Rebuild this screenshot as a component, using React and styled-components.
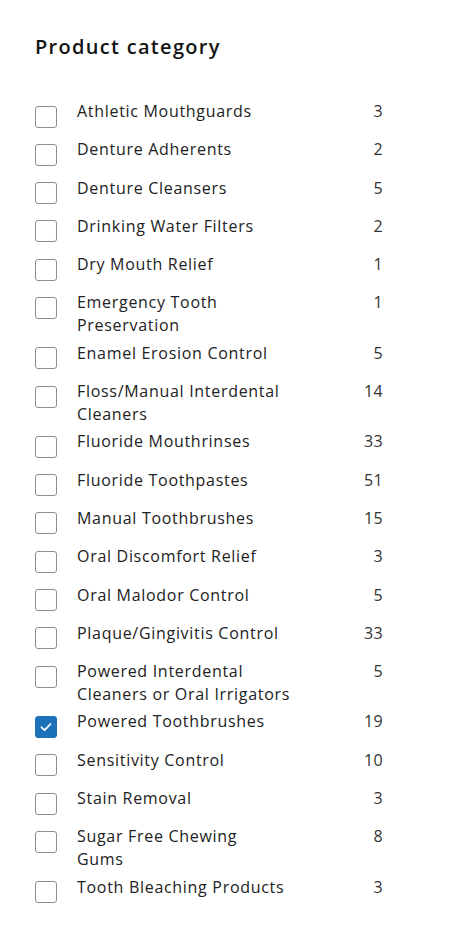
import React from "react";
import styled, { createGlobalStyle } from "styled-components";

const GlobalStyle = createGlobalStyle`
  html, body {
    margin: 0;
    padding: 0;
    background: #fff;
  }
  body {
    font-family: "Open Sans", "Liberation Sans", sans-serif;
    color: #222;
  }
`;

const Panel = styled.section`
  width: 348px;
  padding: 35px 0 0 35px;
`;

const Title = styled.h2`
  margin: 0 0 41px;
  font-size: 20px;
  line-height: 24px;
  font-weight: 600;
  letter-spacing: 1.3px;
  color: #141414;
`;

const List = styled.ul`
  list-style: none;
  margin: 0;
  padding: 0;
  display: flex;
  flex-direction: column;
  gap: 4.3px;
`;

const Row = styled.li`
  display: grid;
  grid-template-columns: 22px 1fr auto;
  column-gap: 20px;
  align-items: start;
  min-height: 34px;
  cursor: pointer;
`;

const Box = styled.span`
  box-sizing: border-box;
  width: 22px;
  height: 22px;
  margin-top: 5.5px;
  border-radius: 3px;
  border: 1.5px solid ${(p) => (p.$checked ? "#1c72b8" : "#8d8d8d")};
  background: ${(p) => (p.$checked ? "#1c72b8" : "#fff")};
  display: flex;
  align-items: center;
  justify-content: center;
`;

const Label = styled.span`
  max-width: 230px;
  white-space: pre-line;
  font-size: 16px;
  line-height: 23px;
  letter-spacing: 0.7px;
  color: #222;
`;

const Count = styled.span`
  font-size: 16px;
  line-height: 23px;
  letter-spacing: 0.4px;
  color: #333;
  text-align: right;
`;

const categories = [
  ["Athletic Mouthguards", 3],
  ["Denture Adherents", 2],
  ["Denture Cleansers", 5],
  ["Drinking Water Filters", 2],
  ["Dry Mouth Relief", 1],
  ["Emergency Tooth\nPreservation", 1],
  ["Enamel Erosion Control", 5],
  ["Floss/Manual Interdental\nCleaners", 14],
  ["Fluoride Mouthrinses", 33],
  ["Fluoride Toothpastes", 51],
  ["Manual Toothbrushes", 15],
  ["Oral Discomfort Relief", 3],
  ["Oral Malodor Control", 5],
  ["Plaque/Gingivitis Control", 33],
  ["Powered Interdental\nCleaners or Oral Irrigators", 5],
  ["Powered Toothbrushes", 19, true],
  ["Sensitivity Control", 10],
  ["Stain Removal", 3],
  ["Sugar Free Chewing\nGums", 8],
  ["Tooth Bleaching Products", 3],
];

function Check() {
  return (
    <svg width="14" height="14" viewBox="0 0 14 14" fill="none">
      <polyline
        points="2.5,7.3 5.6,10.2 11.5,4"
        stroke="#fff"
        strokeWidth="1.8"
        strokeLinecap="round"
        strokeLinejoin="round"
      />
    </svg>
  );
}

export default function App() {
  return (
    <>
      <GlobalStyle />
      <Panel>
        <Title>Product category</Title>
        <List>
          {categories.map(([name, count, checked]) => (
            <Row key={name}>
              <Box $checked={checked}>{checked && <Check />}</Box>
              <Label>{name}</Label>
              <Count>{count}</Count>
            </Row>
          ))}
        </List>
      </Panel>
    </>
  );
}
